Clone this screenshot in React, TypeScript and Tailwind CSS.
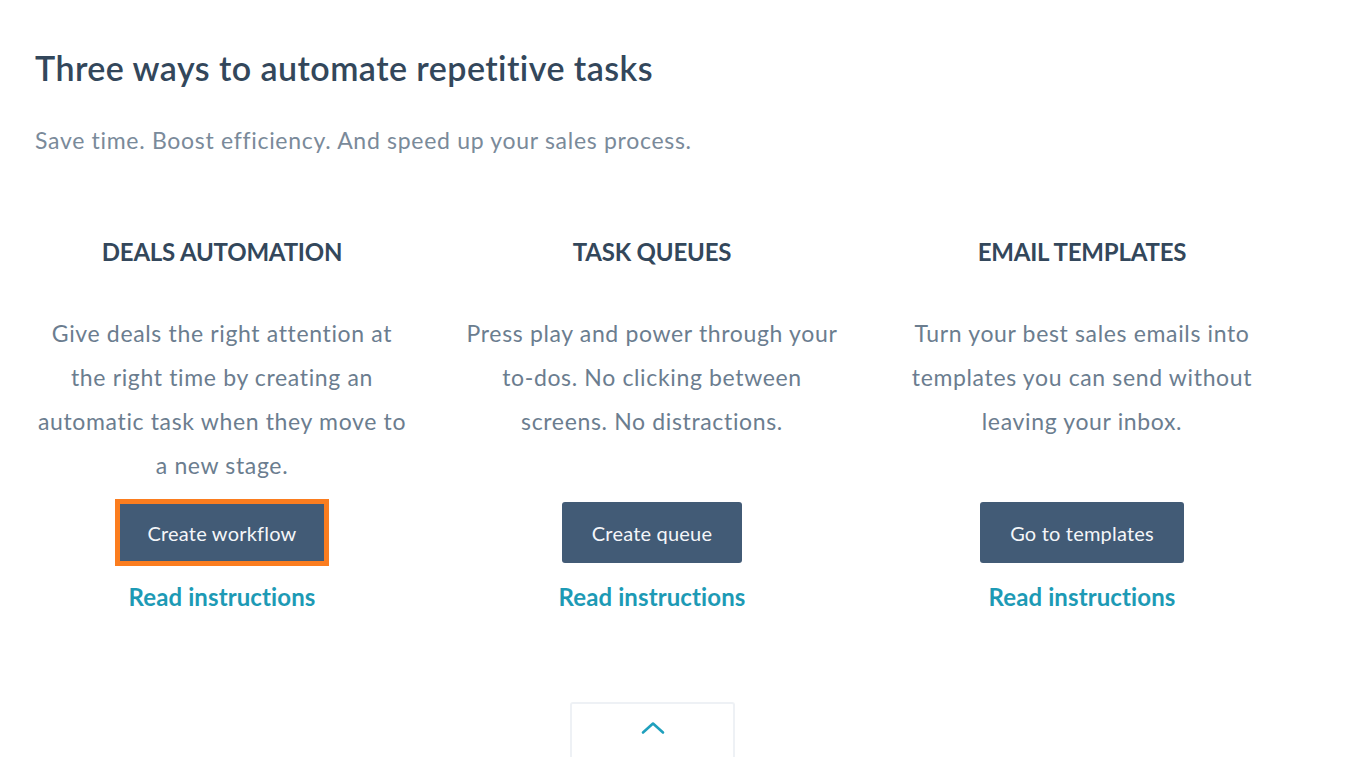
import React from "react";

type Card = {
  title: string;
  lines: string[];
  action: string;
  highlighted?: boolean;
};

const cards: Card[] = [
  {
    title: "DEALS AUTOMATION",
    lines: ["Give deals the right attention at", "the right time by creating an", "automatic task when they move to", "a new stage."],
    action: "Create workflow",
    highlighted: true,
  },
  {
    title: "TASK QUEUES",
    lines: ["Press play and power through your", "to-dos. No clicking between", "screens. No distractions."],
    action: "Create queue",
  },
  {
    title: "EMAIL TEMPLATES",
    lines: ["Turn your best sales emails into", "templates you can send without", "leaving your inbox."],
    action: "Go to templates",
  },
];

function ChevronUp() {
  return (
    <svg width="26" height="15" viewBox="0 0 26 15" fill="none">
      <path d="M3 12.5 L13 3.5 L23 12.5" stroke="#1fa0bd" strokeWidth="2.6" strokeLinecap="round" strokeLinejoin="round" />
    </svg>
  );
}

function FeatureCard({ card }: { card: Card }) {
  return (
    <div className="flex flex-col items-center text-center">
      <h3 className="text-[24px] leading-[30px] font-bold text-[#33475b] tracking-[-0.2px]">{card.title}</h3>
      <div className="mt-[44px] h-[176px] text-[23px] leading-[44px] text-[#6b7d8f] tracking-[0.65px]">
        {card.lines.map((l) => (
          <div key={l}>{l}</div>
        ))}
      </div>
      <div className="relative mt-[15px]">
        <button className="h-[61px] rounded-[3px] bg-[#425b76] px-[30px] text-[20px] text-[#f4f6f9] tracking-[0.2px]">
          {card.action}
        </button>
        {card.highlighted && (
          <span className="pointer-events-none absolute -inset-[3px] border-[5px] border-[#fb7d1f]" />
        )}
      </div>
      <a className="mt-[19px] text-[24px] leading-[30px] font-bold text-[#1d9ab5] tracking-[0.1px]">Read instructions</a>
    </div>
  );
}

export default function App() {
  return (
    <div className="h-[757px] overflow-hidden bg-white font-['Lato','Liberation_Sans',sans-serif]">
      <div className="pl-[35px] pt-[48px]">
        <h1 className="text-[34px] leading-[40px] font-semibold text-[#33475b] tracking-[0.45px]">
          Three ways to automate repetitive tasks
        </h1>
        <p className="mt-[38px] text-[23px] leading-[28px] text-[#7a8a9a] tracking-[0.7px]">
          Save time. Boost efficiency. And speed up your sales process.
        </p>
      </div>
      <div className="ml-[7px] mt-[83px] grid w-[1290px] grid-cols-3">
        {cards.map((c) => (
          <FeatureCard key={c.title} card={c} />
        ))}
      </div>
      <div className="mt-[90px] flex justify-center pr-[46px]">
        <div className="flex h-[60px] w-[165px] justify-center rounded-t-[3px] border-x-[2px] border-t-[2px] border-[#eef1f5] pt-[16px]">
          <ChevronUp />
        </div>
      </div>
    </div>
  );
}
